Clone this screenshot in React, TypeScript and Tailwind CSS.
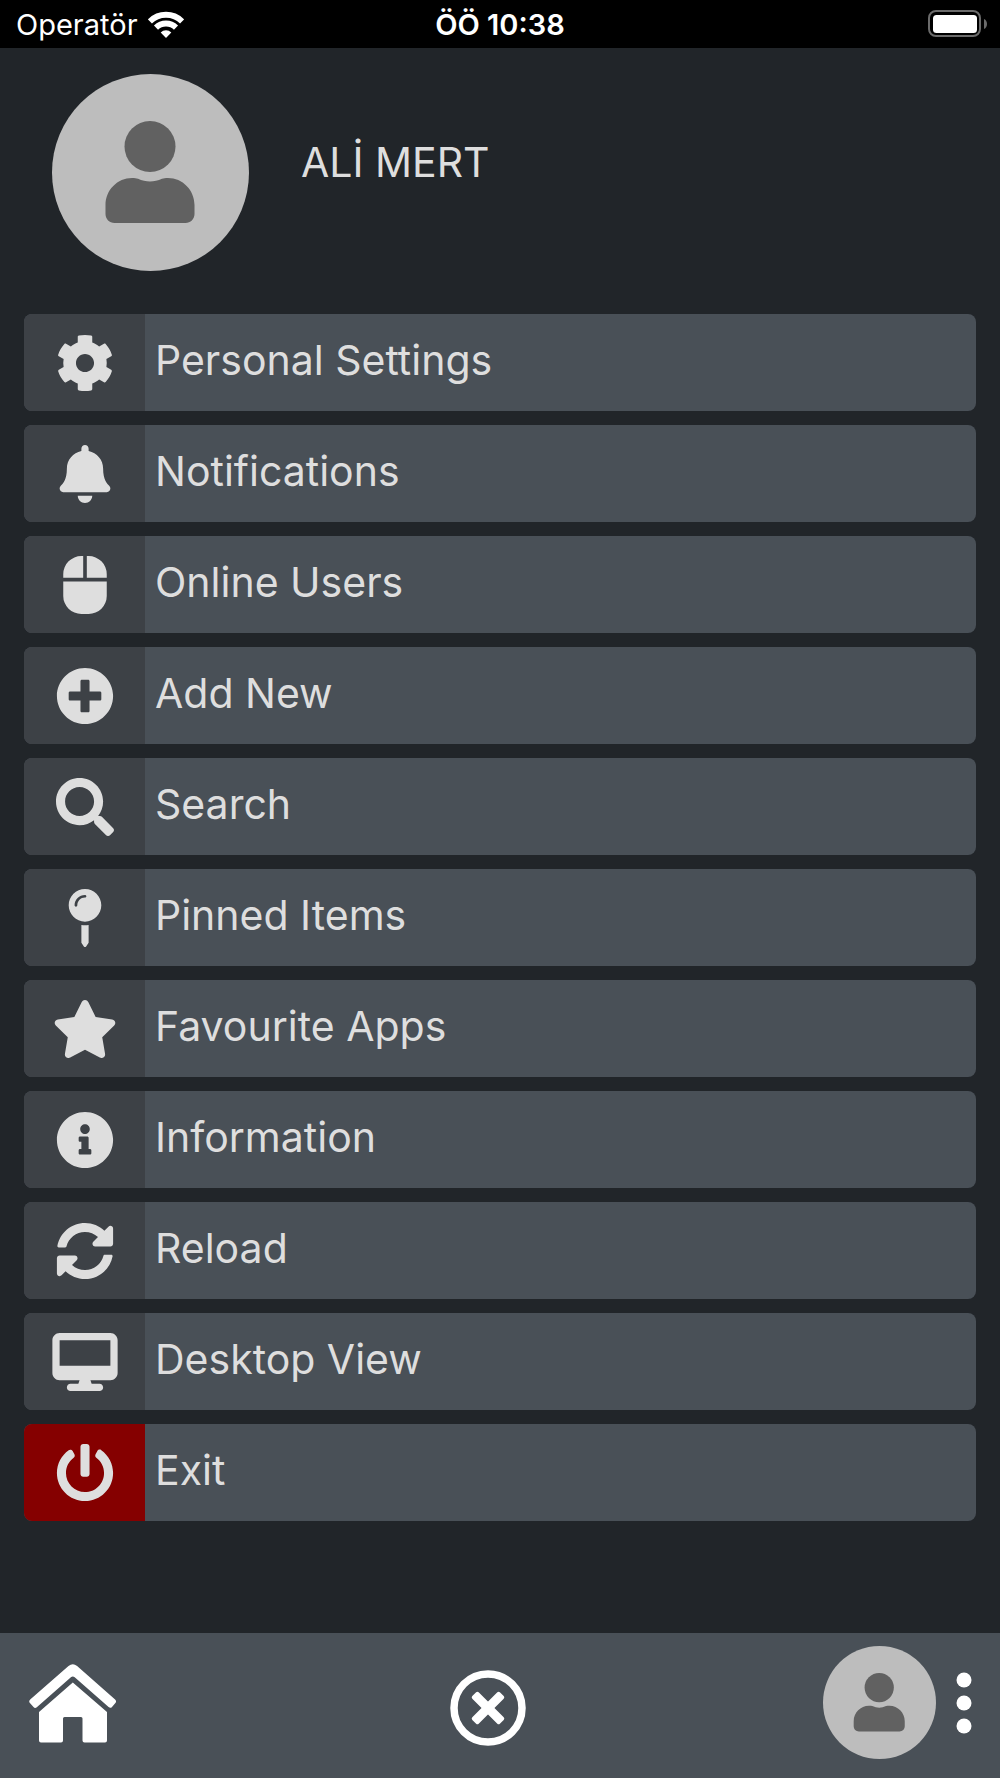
import React from 'react';
import type { IconType } from 'react-icons';
import {
  FaBell,
  FaCog,
  FaInfoCircle,
  FaMapPin,
  FaMouse,
  FaPlusCircle,
  FaPowerOff,
  FaSearch,
  FaStar,
  FaSyncAlt,
} from 'react-icons/fa';
import { FaDesktop } from 'react-icons/fa6';

interface MenuItem {
  label: string;
  icon: IconType;
  danger?: boolean;
}

const menuItems: MenuItem[] = [
  { label: 'Personal Settings', icon: FaCog },
  { label: 'Notifications', icon: FaBell },
  { label: 'Online Users', icon: FaMouse },
  { label: 'Add New', icon: FaPlusCircle },
  { label: 'Search', icon: FaSearch },
  { label: 'Pinned Items', icon: FaMapPin },
  { label: 'Favourite Apps', icon: FaStar },
  { label: 'Information', icon: FaInfoCircle },
  { label: 'Reload', icon: FaSyncAlt },
  { label: 'Desktop View', icon: FaDesktop },
  { label: 'Exit', icon: FaPowerOff, danger: true },
];

const WifiIcon = () => (
  <svg viewBox="0 0 36 27" className="h-[27px] w-9" aria-hidden="true">
    <g fill="none" stroke="#fff" strokeWidth="5.8">
      <path d="M1.9 10.400a22.8 22.8 0 0 1 32.2 0" />
      <path d="M8 16.600a14.2 14.2 0 0 1 20 0" />
    </g>
    <path d="M18 27l-5.300-5.500a7.600 7.600 0 0 1 10.600 0z" fill="#fff" />
  </svg>
);

const BatteryIcon = () => (
  <svg viewBox="0 0 60 28" className="h-7 w-[60px]" aria-hidden="true">
    <rect x="1" y="1" width="51" height="25" rx="7" fill="none" stroke="#6b6b6b" strokeWidth="2" />
    <rect x="5" y="5" width="44" height="18" rx="3.500" fill="#fff" />
    <path d="M56 9c4 1.600 4 8.400 0 10z" fill="#6b6b6b" />
  </svg>
);

const Avatar = ({ className }: { className: string }) => (
  <svg viewBox="0 0 197 197" className={className} aria-hidden="true">
    <circle cx="98.500" cy="98.500" r="98.500" fill="#bdbdbd" />
    <g fill="#616161">
      <circle cx="98" cy="72.500" r="25.500" />
      <path d="M53.500 131c0-15 12-27 26.500-27 2.500 0 4.500.2 6 .8 8 3.600 16 3.600 24 0 1.500-.6 3.500-.8 6-.8 14.500 0 26.500 12 26.500 27v9c0 5-4 9-9 9h-71c-5 0-9-4-9-9z" />
    </g>
  </svg>
);

const HomeIcon = () => (
  <svg viewBox="0 0 88 79" className="h-[79px] w-[88px]" fill="#fff" aria-hidden="true">
    <path d="M39.500 2q4.300-3.600 8.600 0l38 33.600q1.800 1.600.3 3.300l-3.400 4q-1.500 1.800-3.400.2L45.700 13.300q-1.900-1.600-3.800 0L7.800 43.200q-1.800 1.600-3.300-.2l-3.600-4.100q-1.500-1.700.3-3.300z" />
    <path d="M43.800 18.500L78 48v28.500q0 2-2 2H55.500q-2 0-2-2v-22q0-1.500-1.500-1.500H35.500q-1.500 0-1.500 1.500v22q0 2-2 2H12q-2 0-2-2V48z" />
  </svg>
);

const CloseIcon = () => (
  <svg viewBox="0 0 76 76" className="size-[76px]" aria-hidden="true">
    <circle cx="38" cy="38" r="34" fill="none" stroke="#fff" strokeWidth="7.500" />
    <g fill="#fff" transform="rotate(45 38 38)">
      <rect x="33.500" y="18.500" width="9" height="39" rx="1.800" />
      <rect x="18.500" y="33.500" width="39" height="9" rx="1.800" />
    </g>
  </svg>
);

const DotsIcon = () => (
  <svg viewBox="0 0 16 62" className="h-[62px] w-4" fill="#fff" aria-hidden="true">
    <circle cx="8" cy="8" r="7.500" />
    <circle cx="8" cy="31" r="7.500" />
    <circle cx="8" cy="54" r="7.500" />
  </svg>
);

const StatusBar = () => (
  <div className="grid h-12 grid-cols-3 items-center bg-black px-3 text-[29px] leading-none text-white">
    <div className="flex items-center gap-2.5 pl-1">
      <span>Operatör</span>
      <WifiIcon />
    </div>
    <span className="text-center font-semibold">ÖÖ 10:38</span>
    <div className="flex justify-end">
      <BatteryIcon />
    </div>
  </div>
);

const MenuRow = ({ label, icon: Icon, danger }: MenuItem) => (
  <li>
    <button
      type="button"
      className="flex h-[97px] w-full items-stretch overflow-hidden rounded-lg bg-[#495057] text-left"
    >
      <span
        className={`flex w-[121px] shrink-0 items-center justify-center ${
          danger ? 'bg-[#850000]' : 'bg-[#3d4146]'
        }`}
      >
        <Icon className="h-[58px] w-[66px]" />
      </span>
      <span className="flex items-center pb-1 pl-[10px]">{label}</span>
    </button>
  </li>
);

const App = () => {
  return (
    <div className="flex min-h-screen flex-col bg-[#212529] font-[Inter,'Liberation_Sans',sans-serif] text-[41px] text-[#dedede]">
      <StatusBar />
      <header className="flex items-center gap-[52px] px-[52px] pt-[26px]">
        <Avatar className="size-[197px] shrink-0" />
        <h1 className="pb-5">ALİ MERT</h1>
      </header>
      <main className="px-6 pt-[43px] pb-8">
        <ul className="flex flex-col gap-[14px]">
          {menuItems.map((item) => (
            <MenuRow key={item.label} {...item} />
          ))}
        </ul>
      </main>
      <nav className="mt-auto flex h-[145px] items-center justify-between bg-[#495057] pr-7 pl-[29px]">
        <button type="button" aria-label="Home" className="pr-9 pb-1">
          <HomeIcon />
        </button>
        <button type="button" aria-label="Close" className="pt-1">
          <CloseIcon />
        </button>
        <div className="flex items-center gap-5">
          <button type="button" aria-label="Profile" className="pb-1.5">
            <Avatar className="size-[113px]" />
          </button>
          <button type="button" aria-label="More" className="pb-1.5">
            <DotsIcon />
          </button>
        </div>
      </nav>
    </div>
  );
};

export default App;
